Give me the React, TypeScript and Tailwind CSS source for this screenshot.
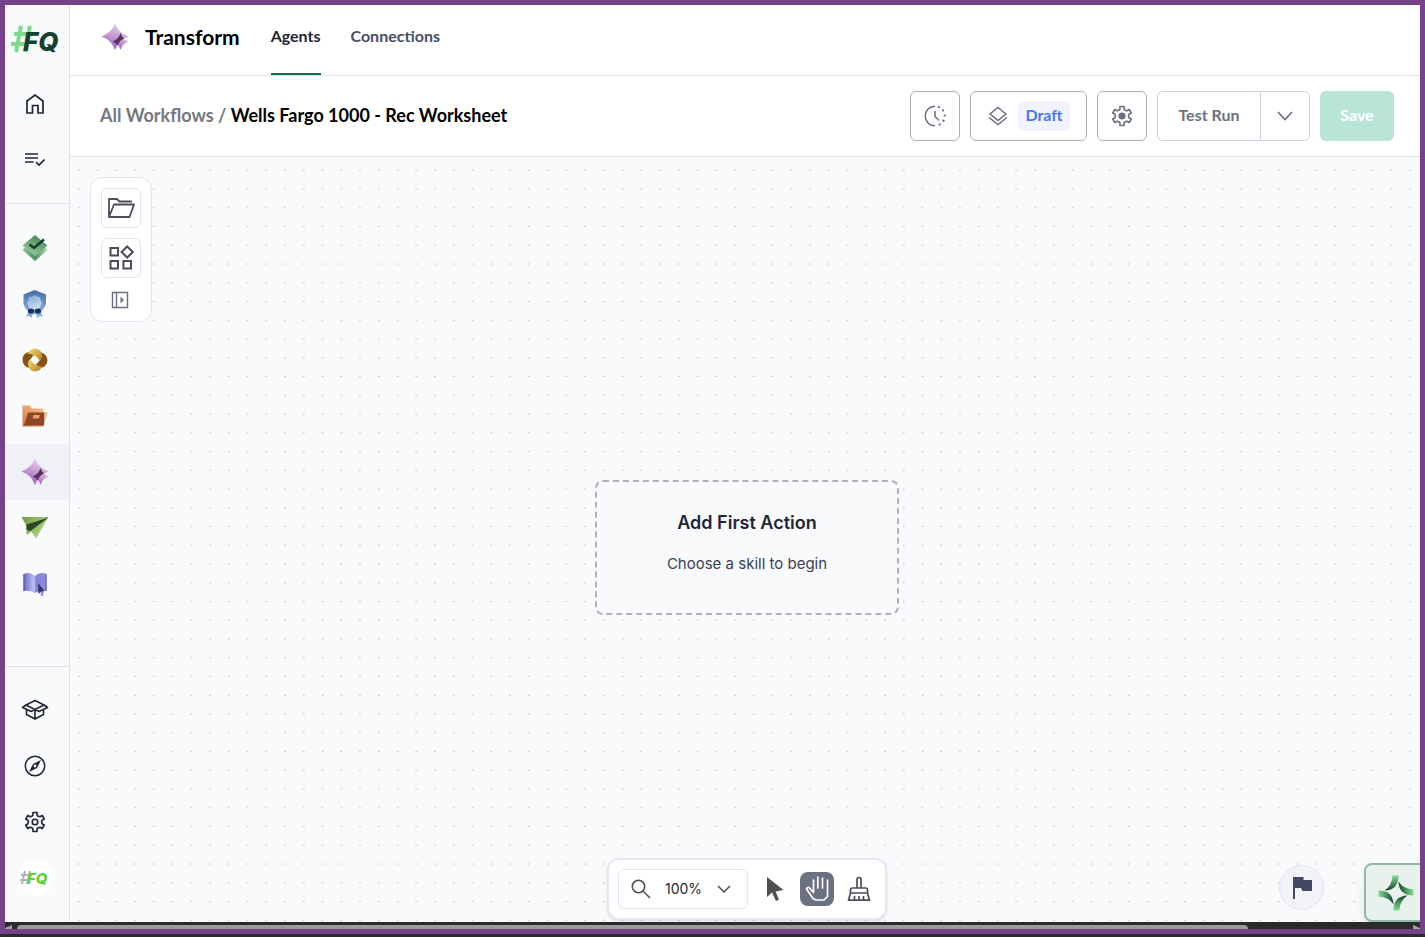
import React from 'react';
import clsx from 'clsx';

interface NavItemProps {
  label: string;
  active?: boolean;
  children: React.ReactNode;
}

// six-toothed cog outline, centred on 12,12
const cogPath = () => {
  const shape = [
    [-30, 7.2],
    [-16, 7.9],
    [-12, 10.6],
    [12, 10.6],
    [16, 7.9],
  ];
  const points: string[] = [];
  for (let tooth = 0; tooth < 6; tooth++) {
    shape.forEach(([angle, radius]) => {
      const a = ((tooth * 60 + angle - 90) * Math.PI) / 180;
      points.push(`${(12 + radius * Math.cos(a)).toFixed(2)} ${(12 + radius * Math.sin(a)).toFixed(2)}`);
    });
  }
  return `M${points.join('L')}Z`;
};

const Cog = ({ solid }: { solid?: boolean }) => (
  <svg viewBox="0 0 24 24" className="size-[22px]" fill="none" stroke="currentColor" strokeWidth="1.8" strokeLinejoin="round">
    <path d={cogPath()} />
    <circle cx="12" cy="12" r="3" fill={solid ? 'currentColor' : 'none'} />
  </svg>
);

const Sparkle = ({ id }: { id: string }) => (
  <svg viewBox="0 0 28 28" className="size-7">
    <defs>
      <linearGradient id={id} x1="0.7" y1="0" x2="0.3" y2="1">
        <stop offset="0" stopColor="#ecdcf1" />
        <stop offset="0.5" stopColor="#c59bd5" />
        <stop offset="1" stopColor="#9c5bb8" />
      </linearGradient>
    </defs>
    <path d="M14 0Q17.500 10 27.500 13.500Q17.500 17 14 27Q10.500 17 .5 13.500Q10.500 10 14 0Z" fill={`url(#${id})`} />
    <path d="M19.500 10.500Q21.500 16.500 27.500 18.500Q21.500 20.500 19.500 27Q17.500 20.500 12 18.500Q17.500 16.500 19.500 10.500Z" fill={`url(#${id})`} />
    <path d="M19.500 10Q20.500 13.500 23 15.500Q18.500 17.500 16.500 22.500Q14.500 19.500 11.500 18.500Q17.500 16.500 19.500 10Z" fill="#58325f" />
  </svg>
);

const HomeIcon = () => (
  <svg viewBox="0 0 20 22" className="h-[22px] w-5" fill="none" stroke="currentColor" strokeWidth="1.7">
    <path d="M2 20V8L10 2L18 8V20H13V12.500H7.500V20Z" />
  </svg>
);

const TaskIcon = () => (
  <svg viewBox="0 0 20 16" className="h-4 w-5" fill="none" stroke="currentColor" strokeWidth="1.7">
    <path d="M0 2H13M0 6H13M0 10H8.500M11 10L14 13L19.500 7.500" />
  </svg>
);

const LayersApp = () => (
  <svg viewBox="0 0 26 28" className="h-7 w-[26px]">
    <defs>
      <linearGradient id="layerTop" x1="0.8" y1="0" x2="0.2" y2="1">
        <stop offset="0" stopColor="#3e8253" />
        <stop offset="1" stopColor="#a0cf9f" />
      </linearGradient>
      <linearGradient id="layerBase" x1="0" y1="0" x2="1" y2="0">
        <stop offset="0" stopColor="#8fca96" />
        <stop offset="0.5" stopColor="#4a9160" />
        <stop offset="1" stopColor="#b4dab1" />
      </linearGradient>
    </defs>
    <path d="M.5 16L3.500 13L22.500 13L25.500 16L13 27Z" fill="url(#layerBase)" />
    <path d="M13 1L25.500 11.500L13 22L.5 11.500Z" fill="url(#layerTop)" />
    <path d="M7.500 10.500L12 14L22 5.500" fill="none" stroke="#143a28" strokeWidth="2.400" />
  </svg>
);

const BadgeApp = () => (
  <svg viewBox="0 0 26 28" className="h-7 w-[26px]">
    <defs>
      <linearGradient id="shield" x1="0" y1="0" x2="0" y2="1">
        <stop offset="0" stopColor="#416ba8" />
        <stop offset="1" stopColor="#94b5df" />
      </linearGradient>
      <linearGradient id="seal" x1="0.3" y1="0" x2="0.7" y2="1">
        <stop offset="0" stopColor="#85abd9" />
        <stop offset="1" stopColor="#d5e3f4" />
      </linearGradient>
    </defs>
    <path d="M12.500 0L24 4.500V14Q22 21 12.500 24.500Q3 21 1.500 14V4.500Z" fill="url(#shield)" />
    <path d="M12.500 5L15 6.500L18 7L18.500 10L20 13L18.500 16L17 19L12.500 20L8 19L6.500 16L5 13L6.500 10L7 7L10 6.500Z" fill="url(#seal)" />
    <path d="M7.500 20L11.500 22L9.500 28L7.500 26L4 26.500Z M17.500 20L13.500 22L15.500 28L17.500 26L21 26.500Z" fill="#8baee2" />
    <ellipse cx="9" cy="21" rx="3.200" ry="2.600" fill="#1b3157" />
    <ellipse cx="16" cy="21" rx="3.200" ry="2.600" fill="#1b3157" />
  </svg>
);

const LinkApp = () => (
  <svg viewBox="0 0 26 24" className="h-6 w-[26px]">
    <defs>
      <linearGradient id="gold" x1="0" y1="0" x2="1" y2="1">
        <stop offset="0" stopColor="#f6df7b" />
        <stop offset="1" stopColor="#b87b22" />
      </linearGradient>
    </defs>
    <path d="M13 5Q10 3 7 4Q.5 5 .5 12Q1 19 8 20L13 18L8 12Z" fill="#875315" />
    <path d="M13 5L18 4Q25 6 25.500 12Q25 19 18 20L13 18L18 12Z" fill="#875315" />
    <path d="M6 6Q7 1 13 .5Q20 1 20 8Q20 12 17 13L12 8Q9 5 6 6Z" fill="url(#gold)" />
    <path d="M20 18Q19 23 13 23.500Q6 23 6 16Q6 12 9 11L14 16Q17 19 20 18Z" fill="url(#gold)" />
    <path d="M13 7.500L17.500 12L13 16.500L8.500 12Z" fill="#fff" />
  </svg>
);

const FolderApp = () => (
  <svg viewBox="0 0 26 22" className="h-[22px] w-[26px]">
    <defs>
      <linearGradient id="folder" x1="0" y1="1" x2="1" y2="0">
        <stop offset="0" stopColor="#d5733f" />
        <stop offset="1" stopColor="#f9c99b" />
      </linearGradient>
    </defs>
    <path d="M.5 .5H8L10 3.500H21.500V7H25.500L21.500 21.500H.5Z" fill="url(#folder)" />
    <path d="M6 7.500H22V20L21 20.500H2Z" fill="#8b4626" />
    <path d="M11.500 10H18L17 13.500H10.500Z" fill="#ec9d6b" />
  </svg>
);

const PlaneApp = () => (
  <svg viewBox="0 0 28 22" className="h-[22px] w-7">
    <defs>
      <linearGradient id="plane" x1="0" y1="0" x2="1" y2="0.4">
        <stop offset="0" stopColor="#6f9a3d" />
        <stop offset="1" stopColor="#b0d587" />
      </linearGradient>
    </defs>
    <path d="M.5 0H27.500L15 21.500L10.500 14.500L5.500 18V9Z" fill="url(#plane)" />
    <path d="M27.500 .5L5.500 7.500V13L9.500 14Z" fill="#294a22" />
  </svg>
);

const BookApp = () => (
  <svg viewBox="0 0 26 26" className="size-[26px]">
    <defs>
      <linearGradient id="page" x1="0" y1="0" x2="1" y2="0">
        <stop offset="0" stopColor="#6767c8" />
        <stop offset="0.450" stopColor="#c0c0f0" />
        <stop offset="0.550" stopColor="#8484dc" />
        <stop offset="1" stopColor="#8d8de0" />
      </linearGradient>
    </defs>
    <path d="M1.500 3Q8 0 13 5Q18 0 24.500 3V20Q18 19 13 22Q8 19 1.500 20Z" fill="url(#page)" />
    <path d="M2 3V20M24 3V20" stroke="#5555b8" strokeWidth="1" />
    <path d="M18 18L22 19L21 25H19Z" fill="#8d92e4" />
    <path d="M16 12L22.500 20L19 20.500L16.500 23Z" fill="#353660" />
  </svg>
);

const BoxIcon = () => (
  <svg viewBox="0 0 28 22" className="h-[22px] w-7" fill="none" stroke="currentColor" strokeWidth="1.600" strokeLinejoin="round">
    <path d="M14 1.500L23 6L14 10.500L5 6ZM5 6L1.500 8.500L10 12.500L14 10.500L18 12.500L26.500 8.500L23 6M5.500 11V15.500L14 20L22.500 15.500V11M14 10.500V20" />
  </svg>
);

const CompassIcon = () => (
  <svg viewBox="0 0 22 22" className="size-[22px]" fill="none" stroke="currentColor" strokeWidth="1.500">
    <circle cx="11" cy="11" r="9.700" />
    <path d="M17 5L13 13L5 17L9 9Z" fill="currentColor" stroke="none" />
    <circle cx="11" cy="11" r="1.400" fill="#f9fafc" stroke="none" />
  </svg>
);

const NavItem = ({ label, active, children }: NavItemProps) => (
  <a
    href="#"
    aria-label={label}
    className={clsx('flex h-14 w-full items-center justify-center pr-[5px]', active && 'bg-[#f0f1f7]')}>
    {children}
  </a>
);

const Sidebar = () => (
  <nav className="flex w-[65px] shrink-0 flex-col border-r border-[#dfe2ec] bg-[#f9fafc] text-[#1e2536]">
    <div className="border-b border-[#dfe2ec] pb-[15px]">
      <div className="flex h-[71px] items-center pb-1 pl-1">
        <svg viewBox="0 0 58 36" className="h-9 w-[58px]">
          <path d="M12 5L7 31M21 5L16 31M5 13H24M2 23H20" stroke="#7ddb8d" strokeWidth="4" />
          <text x="14" y="30" className="font-['Inter'] text-[26px] font-extrabold italic" fill="#16402f">FQ</text>
        </svg>
      </div>
      <NavItem label="Home"><HomeIcon /></NavItem>
      <NavItem label="Tasks"><TaskIcon /></NavItem>
    </div>
    <div className="flex-1 pt-4">
      <NavItem label="Close"><LayersApp /></NavItem>
      <NavItem label="Compliance"><BadgeApp /></NavItem>
      <NavItem label="Match"><LinkApp /></NavItem>
      <NavItem label="Files"><FolderApp /></NavItem>
      <NavItem label="Transform" active><Sparkle id="navSparkle" /></NavItem>
      <NavItem label="Send"><PlaneApp /></NavItem>
      <NavItem label="Learn"><BookApp /></NavItem>
    </div>
    <div className="border-t border-[#dfe2ec] pt-[15px] pb-4">
      <NavItem label="Resources"><BoxIcon /></NavItem>
      <NavItem label="Explore"><CompassIcon /></NavItem>
      <NavItem label="Settings"><Cog /></NavItem>
      <NavItem label="Account">
        <span className="flex size-9 items-center justify-center rounded-full bg-white">
          <svg viewBox="0 0 34 22" className="h-[22px] w-[34px]">
            <path d="M7 4L4 17M12 4L9 17M3 8H14M2 13H12" stroke="#b1b3b1" strokeWidth="2" />
            <text x="9" y="17" className="font-['Inter'] text-[15px] font-extrabold italic" fill="#61d136">FQ</text>
          </svg>
        </span>
      </NavItem>
    </div>
  </nav>
);

const Header = () => (
  <header className="flex h-[71px] items-stretch border-b border-[#dfe2ec] bg-white pl-[31px]">
    <div className="flex items-center gap-4 pb-[7px]">
      <Sparkle id="headSparkle" />
      <h1 className="text-[21px] font-bold text-black">Transform</h1>
    </div>
    <div className="ml-[31px] flex gap-[30px] text-base font-bold">
      <a href="#" className="flex items-center border-b-2 border-[#186a4b] pb-1.5 text-[#1e2536]">Agents</a>
      <a href="#" className="flex items-center border-b-2 border-transparent pb-1.5 text-[#474e68]">Connections</a>
    </div>
  </header>
);

const Toolbar = () => (
  <div className="flex h-[81px] items-center justify-between border-b border-[#dfe2ec] bg-white pr-[26px] pl-[30px]">
    <div className="pb-0.5 text-[18px] font-bold text-black">
      <a href="#" className="text-[#757780]">All Workflows /</a> Wells Fargo 1000 - Rec Worksheet
    </div>
    <div className="flex gap-2.5 text-base font-bold text-[#6b7080]">
      <button aria-label="History" className="flex size-[50px] items-center justify-center rounded-md border border-[#acb0bb]">
        <svg viewBox="0 0 22 22" className="size-[22px]" fill="none" stroke="currentColor" strokeWidth="1.500">
          <path d="M11 1.200A9.800 9.800 0 0 0 11 20.800M11 6V11.500L15 15.500" />
          <path d="M14 1.700A9.800 9.800 0 0 1 14 20.300" strokeWidth="2" strokeDasharray="2 3.300" />
        </svg>
      </button>
      <button className="flex h-[50px] items-center gap-2.5 rounded-md border border-[#acb0bb] pr-4 pl-[17px]">
        <svg viewBox="1 1 20 20" className="size-5" fill="none" stroke="currentColor" strokeWidth="1.500">
          <path d="M11 2.500L19 9L11 15.500L3 9ZM2 12.500L11 19.500L20 12.500" />
        </svg>
        <span className="flex h-[30px] w-[52px] items-center justify-center rounded-md bg-[#f0f4ff] pb-0.5 text-[#4b77ee]">Draft</span>
      </button>
      <button aria-label="Workflow settings" className="flex size-[50px] items-center justify-center rounded-md border border-[#acb0bb]">
        <Cog solid />
      </button>
      <div className="flex h-[50px] rounded-md border border-[#cdd2e0]">
        <button className="w-[102px] pb-0.5">Test Run</button>
        <button aria-label="More run options" className="flex w-[49px] items-center justify-center border-l border-[#cdd2e0]">
          <svg viewBox="0 0 16 10" className="h-2.5 w-4" fill="none" stroke="currentColor" strokeWidth="1.600">
            <path d="M1 1L8 8.500L15 1" />
          </svg>
        </button>
      </div>
      <button className="h-[50px] w-[74px] rounded-md bg-[#b9e5d5] pb-0.5 text-white">Save</button>
    </div>
  </div>
);

const SkillPanel = () => (
  <div className="absolute top-5 left-5 flex w-[62px] flex-col items-center gap-2.5 rounded-xl border border-[#e1e5ef] bg-white pt-2.5 pb-[9px] text-[#4a4d5a]">
    <button aria-label="Files" className="flex size-10 items-center justify-center rounded-md border border-[#e1e5ef]">
      <svg viewBox="0 0 28 22" className="h-[22px] w-7" fill="none" stroke="currentColor" strokeWidth="1.800" strokeLinejoin="round">
        <path d="M2 20V2H10L12.500 4.500H25M2 20L7 7.500H27L22.500 20Z" />
      </svg>
    </button>
    <button aria-label="Skills" className="flex size-10 items-center justify-center rounded-md border border-[#e1e5ef]">
      <svg viewBox="0 0 26 26" className="size-[26px]" fill="none" stroke="currentColor" strokeWidth="2">
        <path d="M2.500 3H10V10.500H2.500ZM2.500 16H10V23.500H2.500ZM15.500 16H23V23.500H15.500ZM19.200 1.500L24.800 7L19.200 12.500L13.600 7Z" />
      </svg>
    </button>
    <button aria-label="Expand panel" className="flex size-6 items-center justify-center pr-0.5 text-[#6b7080]">
      <svg viewBox="0 0 18 18" className="size-[18px]" fill="none" stroke="currentColor" strokeWidth="1.400">
        <path d="M1.500 1.500H16.500V16.500H1.500ZM5.500 1.500V16.500" />
        <path d="M9.500 5.500L13 9L9.500 12.500Z" fill="currentColor" stroke="none" />
      </svg>
    </button>
  </div>
);

const ViewControls = () => (
  <div className="absolute bottom-0.5 left-[calc(50%+2px)] flex h-[62px] w-[280px] -translate-x-1/2 items-center rounded-xl border-2 border-[#e6e9f2] bg-white px-[9px] text-[#4c4f57] shadow-sm">
    <label className="relative flex h-10 w-[130px] shrink-0 items-center rounded-md border border-[#e1e5ef]">
      <svg viewBox="0 0 20 20" className="absolute left-3 size-5" fill="none" stroke="currentColor" strokeWidth="1.600">
        <circle cx="7.500" cy="7.500" r="6.200" />
        <path d="M12 12L19 19" />
      </svg>
      <select
        aria-label="Zoom level"
        className="h-full w-full appearance-none bg-transparent pb-0.5 pl-[46px] font-['Inter'] text-[14px] text-[#232733]">
        <option>100%</option>
      </select>
      <svg viewBox="0 0 14 8" className="pointer-events-none absolute right-4 h-2 w-3.5" fill="none" stroke="currentColor" strokeWidth="1.500">
        <path d="M1 1L7 7L13 1" />
      </svg>
    </label>
    <div className="ml-2.5 flex gap-2">
      <button aria-label="Select" className="flex size-[34px] items-center justify-center">
        <svg viewBox="0 0 18 26" className="h-[26px] w-[18px]" fill="#505052">
          <path d="M1 1V21L6 16.500L10 25L13 23.500L9.500 15.500L17.500 14Z" />
        </svg>
      </button>
      <button aria-label="Pan" className="flex size-[34px] items-center justify-center rounded-lg bg-[#6a7180]">
        <svg viewBox="0 0 34 34" className="size-[34px]" fill="none" stroke="#fff" strokeWidth="1.700" strokeLinecap="round" strokeLinejoin="round">
          <path d="M13.500 8V20.500L9 15.500Q7 15 6.500 17L13 26.500L16 28H24L27.500 24.500V8M17.800 5V16M22.500 6V16" />
        </svg>
      </button>
      <button aria-label="Clean up" className="flex size-[34px] items-center justify-center">
        <svg viewBox="0 0 24 26" className="h-[26px] w-6" fill="none" stroke="currentColor" strokeWidth="1.700" strokeLinejoin="round">
          <path d="M10 12V3.500Q10 1.500 12 1.500Q14 1.500 14 3.500V12M3.500 17V14Q3.500 12 5.500 12H18.500Q20.500 12 20.500 14V17ZM3.500 17L1.500 24.200H22.500L20.500 17M7.500 24V20M12 24V20M16.500 24V20" />
        </svg>
      </button>
    </div>
  </div>
);

const Canvas = () => (
  <main className="relative flex flex-1 items-center justify-center overflow-hidden bg-[#f9fafc]">
    <svg className="absolute inset-0 size-full" aria-hidden="true">
      <defs>
        <pattern id="dots" width="18.750" height="18.750" patternUnits="userSpaceOnUse">
          <circle cx="8.800" cy="13.200" r="0.700" fill="#a9acb5" />
        </pattern>
      </defs>
      <rect width="100%" height="100%" fill="url(#dots)" />
    </svg>

    <SkillPanel />

    <div className="relative mt-4 ml-1 flex h-[135px] w-[304px] flex-col items-center rounded-lg border-2 border-dashed border-[#afb2ba] bg-[#f9fafc] pt-[27px] font-['Inter']">
      <h2 className="text-[18px] leading-7 font-semibold text-[#1e2536]">Add First Action</h2>
      <p className="mt-[15px] text-[15px] leading-6 text-[#3a4154]">Choose a skill to begin</p>
    </div>

    <ViewControls />

    <button
      aria-label="Report"
      className="absolute right-24 bottom-3 flex size-[45px] items-center justify-center rounded-full border border-[#e1e4f0] bg-[#f2f3f8]">
      <svg viewBox="0 0 20 22" className="h-[22px] w-5" fill="#454766">
        <path d="M1 0H11.500V3H20V14H10.500L9 11H3V22H1Z" />
      </svg>
    </button>

    <button
      aria-label="Assistant"
      className="absolute -right-2 bottom-0 flex h-[59px] w-16 items-center justify-center rounded-lg border-2 border-[#92b8a5] bg-[#e8f1ec] shadow-lg">
      <svg viewBox="0 0 36 36" className="size-9">
        <defs>
          <linearGradient id="assist" x1="0" y1="0" x2="0" y2="1">
            <stop offset="0" stopColor="#80e092" />
            <stop offset="1" stopColor="#16452f" />
          </linearGradient>
        </defs>
        {[0, 90, 180, 270].map((turn) => (
          <path
            key={turn}
            d="M14.500 .5H20.500Q20.500 15 6.500 15.500Q14 11 14.500 .5Z"
            fill="url(#assist)"
            transform={`rotate(${turn} 18 18)`}
          />
        ))}
      </svg>
    </button>
  </main>
);

const App = () => {
  return (
    <div className="flex min-h-screen flex-col bg-[#2b2b2d] pb-[3px] font-['Lato',sans-serif]">
      <div className="flex flex-1 flex-col border-5 border-[#75428a]">
        <div className="flex flex-1">
          <Sidebar />
          <div className="flex min-w-0 flex-1 flex-col">
            <Header />
            <Toolbar />
            <Canvas />
          </div>
        </div>
        {/* horizontal scroll track */}
        <div className="flex h-[7px] items-end justify-between bg-[#2b2b2d]">
          <svg viewBox="0 0 8 4" className="h-1 w-2" fill="#a0a0a0"><path d="M0 3L7 0V4H0Z" /></svg>
          <div className="mr-auto ml-1 h-1 w-[87%] rounded-t bg-[#9c9c9c]" />
          <svg viewBox="0 0 8 4" className="h-1 w-2" fill="#a0a0a0"><path d="M1 0L8 3V4H1Z" /></svg>
        </div>
      </div>
    </div>
  );
};

export default App;
